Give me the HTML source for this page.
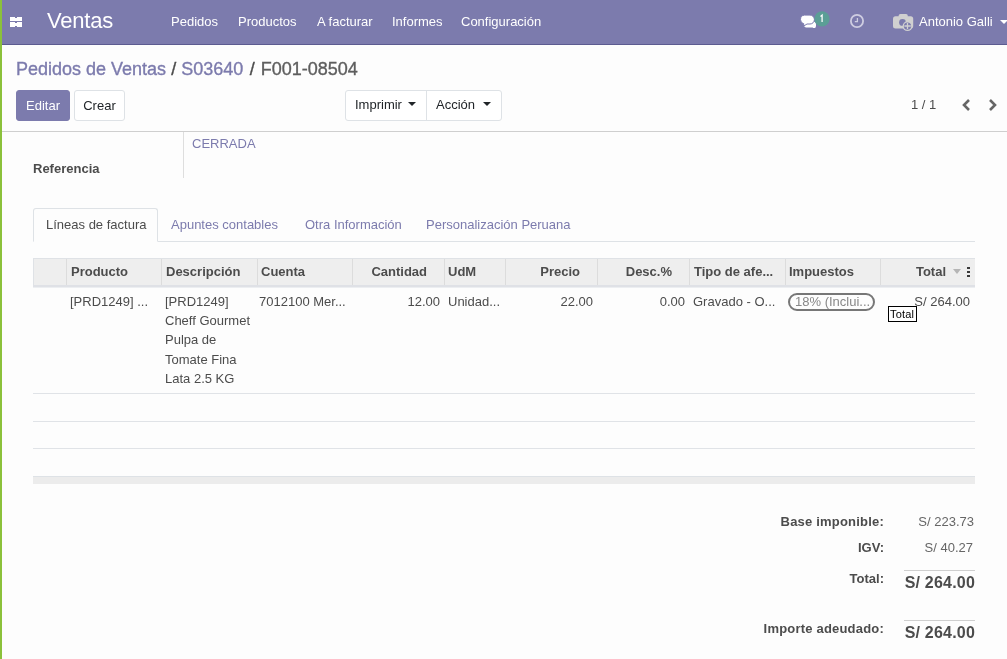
<!DOCTYPE html>
<html><head><meta charset="utf-8">
<style>
*{box-sizing:border-box;margin:0;padding:0}
html,body{width:1007px;height:659px;overflow:hidden;background:#fdfdfd}
body{position:relative;will-change:transform;font-family:"Liberation Sans",sans-serif;font-size:13px;color:#4c4c4c}
.a{position:absolute;white-space:nowrap;line-height:16px}
#green{position:absolute;left:0;top:0;width:2px;height:659px;background:#8bc13b;z-index:10}
#nav{position:absolute;left:0;top:0;width:1007px;height:45px;background:#7c7bad;border-bottom:1px solid #5c5b90}
#nav .m{color:#fff;font-size:13px}
.btn{position:absolute;border:1px solid #dee2e6;border-radius:3px;background:#fff;color:#212529}
.th{position:absolute;top:258px;height:27px;line-height:27px;font-weight:bold;color:#4c4c4c;font-size:13px}
.vl{position:absolute;top:259px;height:26px;width:1px;background:#dcdcdc}
.hl{position:absolute;left:33px;width:942px;height:1px;background:#e0e3e7}
.td{position:absolute;line-height:19.2px;color:#4c4c4c}
.r{text-align:right}
</style></head><body>
<div id="green"></div>
<div id="nav">
  <!-- apps icon -->
  <div style="position:absolute;left:10px;top:17px;width:12px;height:4px;background:#fff"></div>
  <div style="position:absolute;left:10px;top:22px;width:12px;height:5px;background:#fff"></div>
  <div style="position:absolute;left:15px;top:17px;width:2px;height:1px;background:#7c7bad"></div>
  <div style="position:absolute;left:15px;top:22px;width:2px;height:1px;background:#7c7bad"></div>
  <div style="position:absolute;left:15px;top:26px;width:2px;height:1px;background:#7c7bad"></div>
  <div class="a" style="left:47px;top:9px;font-size:22px;line-height:24px;letter-spacing:-0.2px;color:#fff">Ventas</div>
  <div class="a m" style="left:171px;top:14px">Pedidos</div>
  <div class="a m" style="left:238px;top:14px">Productos</div>
  <div class="a m" style="left:317px;top:14px">A facturar</div>
  <div class="a m" style="left:392px;top:14px">Informes</div>
  <div class="a m" style="left:461px;top:14px">Configuración</div>
  <!-- chat icon -->
  <svg style="position:absolute;left:800px;top:14px" width="18" height="16" viewBox="0 0 18 16">
    <path d="M8 7.5 h5 a3 3 0 0 1 3 3 v1.5 a2 2 0 0 1 -1 1.7 l1.2 0.3 h-3 l-0.5 -0.5 h-6.7 a2.5 2.5 0 0 1 -2 -2.5 v-0.5 a3 3 0 0 1 3 -3z" fill="#fff"/>
    <path d="M4.5 1.1 h5.5 a4.4 4.4 0 0 1 4.4 4.4 v0.1 a4.4 4.4 0 0 1 -4.4 4.4 h-3 l-3.5 2.2 l0.3 -2.4 a4.4 4.4 0 0 1 -3.3 -4.2 v-0.1 a4.4 4.4 0 0 1 4 -4.4z" fill="#fff" stroke="#7c7bad" stroke-width="1"/>
  </svg>
  <svg style="position:absolute;left:814px;top:11px" width="16" height="16" viewBox="0 0 16 16"><circle cx="8" cy="7.9" r="7.6" fill="#5b9e96"/><path d="M6.5 5.4 L8.1 4.1 V11" fill="none" stroke="#fff" stroke-width="1.25"/></svg>
  <!-- clock -->
  <svg style="position:absolute;left:849px;top:14px" width="16" height="16" viewBox="0 0 16 16">
    <circle cx="8" cy="7" r="6.1" fill="none" stroke="#cecde1" stroke-width="1.8"/>
    <path d="M8.4 4 v3.7 h-2.6" fill="none" stroke="#cecde1" stroke-width="1.3"/>
  </svg>
  <!-- camera avatar -->
  <svg style="position:absolute;left:892px;top:13px" width="23" height="20" viewBox="0 0 23 20">
    <rect x="1" y="3.2" width="20.2" height="12.4" rx="2.5" fill="#d0d0d0"/>
    <rect x="6.6" y="1" width="9.2" height="4" rx="1.8" fill="#d0d0d0"/>
    <circle cx="10.5" cy="9.4" r="3.4" fill="#7c7bad"/>
    <circle cx="15.5" cy="13.2" r="4.9" fill="#d0d0d0"/>
    <circle cx="15.5" cy="13.2" r="3.6" fill="#7c7bad"/>
    <path d="M15.5 10.1 v5.8 M12.4 13 h6.4" stroke="#d0d0d0" stroke-width="1.3"/>
  </svg>
  <div class="a m" style="left:919px;top:14px">Antonio Galli</div>
  <div style="position:absolute;left:1000px;top:20px;width:0;height:0;border-left:4px solid transparent;border-right:4px solid transparent;border-top:4px solid #fff"></div>
</div>

<!-- control panel -->
<div class="a" style="left:16px;top:59px;font-size:18px;line-height:20px;color:#7c7bad;-webkit-text-stroke:0.35px">Pedidos de Ventas <span style="color:#4c4c4c">/</span> S03640 <span style="color:#4c4c4c;margin-left:1.5px">/</span> <span style="color:#5e5e5e;margin-left:1px">F001-08504</span></div>
<div class="btn" style="left:16px;top:90px;width:54px;height:31px;background:#7c7bad;border-color:#7c7bad;color:#fff;line-height:29px;text-align:center">Editar</div>
<div class="btn" style="left:74px;top:90px;width:51px;height:31px;line-height:29px;text-align:center">Crear</div>
<div class="btn" style="left:345px;top:90px;width:157px;height:31px;line-height:29px"></div>
<div style="position:absolute;left:426px;top:91px;width:1px;height:29px;background:#dee2e6"></div>
<div class="a" style="left:355px;top:97px;color:#212529">Imprimir</div>
<div style="position:absolute;left:408px;top:102px;border-left:4px solid transparent;border-right:4px solid transparent;border-top:4px solid #212529"></div>
<div class="a" style="left:436px;top:97px;color:#212529">Acción</div>
<div style="position:absolute;left:483px;top:102px;border-left:4px solid transparent;border-right:4px solid transparent;border-top:4px solid #212529"></div>
<div class="a" style="left:911px;top:97px;color:#4c4c4c">1 / 1</div>
<svg style="position:absolute;left:961px;top:98px" width="11" height="14" viewBox="0 0 11 14"><path d="M8 2 L3 7 L8 12" fill="none" stroke="#666" stroke-width="2.6"/></svg>
<svg style="position:absolute;left:987px;top:98px" width="11" height="14" viewBox="0 0 11 14"><path d="M3 2 L8 7 L3 12" fill="none" stroke="#666" stroke-width="2.6"/></svg>
<div style="position:absolute;left:0;top:131px;width:1007px;height:1px;background:#cfcfcf"></div>

<!-- form top -->
<div style="position:absolute;left:183px;top:132px;width:1px;height:46px;background:#dedede"></div>
<div class="a" style="left:192px;top:136px;color:#7c7bad">CERRADA</div>
<div class="a" style="left:33px;top:161px;font-weight:bold">Referencia</div>

<!-- tabs -->
<div style="position:absolute;left:33px;top:241px;width:942px;height:1px;background:#dee2e6"></div>
<div style="position:absolute;left:33px;top:208px;width:125px;height:34px;border:1px solid #dee2e6;border-bottom:1px solid #fdfdfd;border-radius:3px 3px 0 0;background:#fdfdfd"></div>
<div class="a" style="left:46px;top:217px;color:#4c4c4c">Líneas de factura</div>
<div class="a" style="left:171px;top:217px;color:#7c7bad">Apuntes contables</div>
<div class="a" style="left:305px;top:217px;color:#7c7bad">Otra Información</div>
<div class="a" style="left:426px;top:217px;color:#7c7bad">Personalización Peruana</div>

<!-- table header -->
<div style="position:absolute;left:33px;top:258px;width:942px;height:27px;background:#eeeeee;border-top:1px solid #dfe2e6;border-left:1px solid #dfe2e6"></div>
<div style="position:absolute;left:33px;top:285px;width:942px;height:2px;background:#dfe1e6"></div>
<div style="position:absolute;left:33px;top:287px;width:942px;height:1px;background:#eceef1"></div>
<div class="vl" style="left:66px"></div>
<div class="vl" style="left:161px"></div>
<div class="vl" style="left:257px"></div>
<div class="vl" style="left:352px"></div>
<div class="vl" style="left:444px"></div>
<div class="vl" style="left:505px"></div>
<div class="vl" style="left:597px"></div>
<div class="vl" style="left:689px"></div>
<div class="vl" style="left:785px"></div>
<div class="vl" style="left:880px"></div>
<div class="th" style="left:71px">Producto</div>
<div class="th" style="left:166px">Descripción</div>
<div class="th" style="left:261px">Cuenta</div>
<div class="th r" style="left:352px;width:75px">Cantidad</div>
<div class="th" style="left:448px">UdM</div>
<div class="th r" style="left:505px;width:75px">Precio</div>
<div class="th r" style="left:597px;width:75px">Desc.%</div>
<div class="th" style="left:694px">Tipo de afe...</div>
<div class="th" style="left:789px">Impuestos</div>
<div class="th r" style="left:880px;width:66px">Total</div>
<div style="position:absolute;left:953px;top:269px;border-left:4px solid transparent;border-right:4px solid transparent;border-top:5px solid #b5b5b5"></div>
<div style="position:absolute;left:967px;top:267px;width:3px;height:2px;background:#3a3a3a"></div>
<div style="position:absolute;left:967px;top:271px;width:3px;height:2px;background:#3a3a3a"></div>
<div style="position:absolute;left:967px;top:275px;width:3px;height:2px;background:#3a3a3a"></div>

<!-- row -->
<div class="td" style="left:70px;top:292px">[PRD1249] ...</div>
<div class="td" style="left:165px;top:292px">[PRD1249]<br>Cheff Gourmet<br>Pulpa de<br>Tomate Fina<br>Lata 2.5 KG</div>
<div class="td" style="left:259px;top:292px">7012100 Mer...</div>
<div class="td r" style="left:352px;top:292px;width:88px">12.00</div>
<div class="td" style="left:448px;top:292px">Unidad...</div>
<div class="td r" style="left:505px;top:292px;width:88px">22.00</div>
<div class="td r" style="left:597px;top:292px;width:88px">0.00</div>
<div class="td" style="left:693px;top:292px">Gravado - O...</div>
<div style="position:absolute;left:788px;top:293px;width:87px;height:18px;border:2px solid #777;border-radius:9px"></div>
<div class="td" style="left:795px;top:292px;color:#888">18% (Inclui...</div>
<div class="td r" style="left:880px;top:292px;width:90px">S/ 264.00</div>
<div style="position:absolute;left:888px;top:306px;width:29px;height:16px;border:1px solid #000;background:#fff;color:#000;font-size:11px;line-height:14px;padding-left:1px;letter-spacing:0.2px">Total</div>

<div class="hl" style="top:393px"></div>
<div class="hl" style="top:421px"></div>
<div class="hl" style="top:448px"></div>
<div style="position:absolute;left:33px;top:476px;width:942px;height:8px;background:#ececec;border-top:1px solid #dee2e6"></div>

<!-- totals -->
<div class="a r" style="left:700px;top:514px;width:184px;font-weight:bold;letter-spacing:0.2px">Base imponible:</div>
<div class="a r" style="left:880px;top:514px;width:94px;color:#666">S/ 223.73</div>
<div class="a r" style="left:700px;top:540px;width:184px;font-weight:bold">IGV:</div>
<div class="a r" style="left:880px;top:540px;width:93px;color:#666">S/ 40.27</div>
<div style="position:absolute;left:904px;top:570px;width:71px;height:1px;background:#cfcfcf"></div>
<div class="a r" style="left:700px;top:571px;width:184px;font-weight:bold">Total:</div>
<div class="a r" style="left:880px;top:573px;width:95px;font-weight:bold;font-size:16px;line-height:20px;letter-spacing:0.2px">S/ 264.00</div>
<div style="position:absolute;left:904px;top:620px;width:71px;height:1px;background:#cfcfcf"></div>
<div class="a r" style="left:700px;top:621px;width:184px;font-weight:bold;letter-spacing:0.2px">Importe adeudado:</div>
<div class="a r" style="left:880px;top:623px;width:95px;font-weight:bold;font-size:16px;line-height:20px;letter-spacing:0.2px">S/ 264.00</div>
</body></html>
